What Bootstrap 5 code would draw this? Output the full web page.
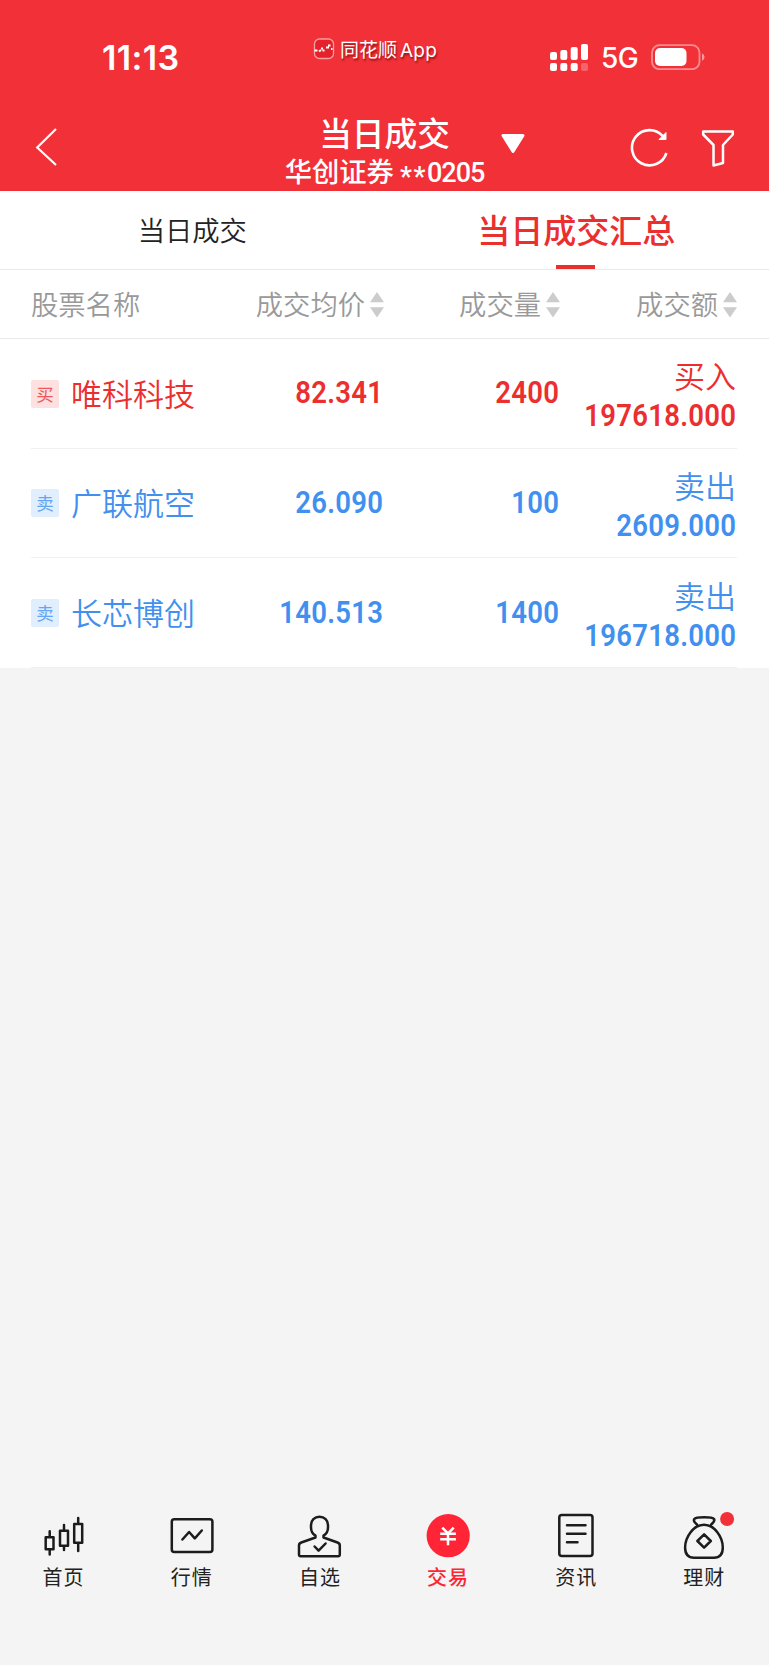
<!DOCTYPE html>
<html lang="zh-CN">
<head>
<meta charset="utf-8">
<meta name="viewport" content="width=device-width, initial-scale=1">
<title>当日成交汇总</title>
<link href="https://cdn.jsdelivr.net/npm/bootstrap@5.3.0/dist/css/bootstrap.min.css" rel="stylesheet">
<style>
  body { font-family: "Noto Sans CJK SC", sans-serif; background: #f4f4f4; color: #222; line-height: 1; }
  svg { display: block; }
  .app { height: 1665px; }
  .top { background: #f23038; height: 191px; color: #fff; }
  .status { height: 110px; padding: 0 64px 0 102px; }
  .clock { font: 600 34px/1 Inter, sans-serif; letter-spacing: .4px; padding-top: 41px; width: 211px; }
  .brand-mini { font-size: 19px; padding-top: 38px; text-shadow: 1px 2px 2px rgba(90,0,0,.65); gap: 5px; }
  .brand-mini .latin { font-family: Inter, sans-serif; letter-spacing: .2px; margin-left: 3px; }
  .signal { padding-top: 43px; }
  .net { font: 500 28px/28px Inter, sans-serif; letter-spacing: -.6px; padding-top: 44px; margin-left: 12px; }
  .battery { padding-top: 44px; margin-left: 13px; }
  .bar { display: grid; grid-template-columns: 1fr auto 1fr; height: 81px; padding: 0 34px 0 34px; align-items: start; }
  .bar-title { font-size: 32.7px; font-weight: 500; line-height: 38px; margin-top: 3px; }
  .bar-sub { font-size: 27.3px; font-weight: 500; line-height: 38px; white-space: pre; }
  .bar-sub .digits { font-family: Roboto, sans-serif; font-size: 27px; letter-spacing: -1px; }
  .bar-sub .stars { letter-spacing: 1.5px; position: relative; top: 4px; }
  .drop { margin: 23px 0 0 16px; }
  .refresh { margin: 17px 29px 0 auto; }
  .filter { margin-top: 20px; }
  .num { font-family: Roboto, sans-serif; font-weight: 600; font-size: 31px; letter-spacing: .3px; transform: scaleX(.887); transform-origin: right center; padding-right: 2px; }
  .deal > .num { margin-top: -2px; }
  .tabs { height: 79px; background: #fff; border-bottom: 1px solid #e9e9e9; }
  .tab { font-size: 27.3px; font-weight: 350; }
  .tab.on { font-size: 33px; font-weight: 500; color: #eb2e2e; padding: 0 1px 2px 0; }
  .tab.on::after { content: ""; position: absolute; left: 50%; bottom: 0; width: 39px; height: 4px; margin-left: -21px; background: #eb2e2e; }
  .cols { display: grid; grid-template-columns: 170px 184px 176px 177px; padding: 0 31px; }
  .heads { height: 69px; background: #fff; border-bottom: 1px solid #e9e9e9; color: #999; font-size: 27.3px; font-weight: 350; }
  .sortable { gap: 5px; padding-right: 1px; white-space: nowrap; }
  .sortable svg { margin-top: 2px; }
  .rows { background: #fff; }
  .deal { height: 109.67px; position: relative; }
  .deal::after { content: ""; position: absolute; left: 31px; right: 32px; bottom: 0; height: 1px; background: #f0f0f0; }
  .buy { color: #eb2e2e; }
  .sell { color: #418fee; }
  .side { width: 28px; height: 28px; font-size: 17.5px; border-radius: 2px; margin-right: 12px; padding-bottom: 1px; }
  .buy .side { background: #fde0e0; color: #ee5858; }
  .sell .side { background: #e1eefd; color: #65a5f1; }
  .stock { font-size: 31px; font-weight: 350; white-space: nowrap; padding-bottom: 3px; }
  .total { line-height: 38px; font-size: 31px; font-weight: 350; padding-top: 2px; }
  .total > span { padding-right: 2px; }
  .total .num { margin-top: 5px; line-height: 34px; }
  .dock { height: 153px; }
  .dock .label { font-size: 20px; letter-spacing: 1px; margin: 7px 0 0 -1px; line-height: 20px; }
  .ic { fill: none; stroke: #1c1c1c; stroke-width: 2.5; stroke-linejoin: round; stroke-linecap: round; }
  .active-tab { color: #ff2436; font-weight: 500; }
</style>
<script src="https://cdn.jsdelivr.net/npm/bootstrap@5.3.0/dist/js/bootstrap.bundle.min.js"></script>
</head>
<body>
<div class="app d-flex flex-column">
  <header class="top">
    <div class="status d-flex align-items-start">
      <div class="clock">11:13</div>
      <div class="brand-mini d-flex align-items-center">
        <svg width="22" height="22" viewBox="0 0 22 22"><rect x="1.500" y="1" width="19" height="19.500" rx="5" fill="#e5222b" stroke="#fff" stroke-opacity=".55" stroke-width="1.300"/><path d="M1.500 12.500h3M6 13.500l2-1.500M8 10.500h2M10.500 11.500v2M13 9.500h3M15 7.500h2.500M18 11h1.500" stroke="#fff" stroke-width="2" fill="none"/></svg>
        <span>同花顺<span class="latin">App</span></span>
      </div>
      <div class="signal ms-auto">
        <svg width="40" height="29" viewBox="0 0 40 29" fill="#fff"><rect x="1" y="9" width="7" height="8" rx="2"/><rect x="11.300" y="7" width="7" height="10" rx="2"/><rect x="21.700" y="4" width="7" height="13" rx="2"/><rect x="32" y="1" width="7" height="16" rx="2"/><rect x="1" y="20" width="7" height="8" rx="2"/><rect x="11.300" y="20" width="7" height="8" rx="2"/><rect x="21.700" y="20" width="7" height="8" rx="2"/><rect x="32" y="20" width="7" height="8" rx="2" opacity=".25"/></svg>
      </div>
      <div class="net">5G</div>
      <div class="battery">
        <svg width="54" height="26" viewBox="0 0 54 26"><rect x="1" y="1.200" width="47.500" height="24" rx="7.500" fill="none" stroke="#fff" stroke-opacity=".45" stroke-width="1.800"/><rect x="4" y="4" width="31.500" height="18" rx="5" fill="#fff"/><path d="M51 9.500c3.300 1.200 3.300 6 0 7.200z" fill="#fff" opacity=".5"/></svg>
      </div>
    </div>
    <div class="bar">
      <svg class="mt-3" width="24" height="44" viewBox="0 0 24 44"><path d="M22 3L3.200 21.500 22 39" fill="none" stroke="#fff" stroke-width="2.200"/></svg>
      <div class="text-center">
        <div class="bar-title">当日成交</div>
        <div class="bar-sub">华创证券 <span class="digits"><span class="stars">**</span>0205</span></div>
      </div>
      <div class="d-flex align-items-start">
        <svg class="drop" width="26" height="22" viewBox="0 0 26 22"><path d="M3 2.500H23L13 18.500z" fill="#fff" stroke="#fff" stroke-width="3" stroke-linejoin="round"/></svg>
        <svg class="refresh" width="42" height="42" viewBox="0 0 42 42"><path d="M36.400 26A17.600 17.600 0 1 1 33 9.300" fill="none" stroke="#fff" stroke-width="2.600"/><path d="M36 5.500V12.500H29z" fill="#fff" stroke="#fff" stroke-width="1"/></svg>
        <svg class="filter" width="34" height="38" viewBox="0 0 34 38"><path d="M2.200 1.500H31.800V4.500L22 15V33L12.500 35.500V15L2.200 4.500z" fill="none" stroke="#fff" stroke-width="2.500" stroke-linejoin="round"/></svg>
      </div>
    </div>
  </header>

  <nav class="tabs row g-0">
    <div class="tab col-6 d-flex justify-content-center align-items-center">当日成交</div>
    <div class="tab on col-6 d-flex justify-content-center align-items-center position-relative">当日成交汇总</div>
  </nav>

  <div class="heads cols align-items-center">
    <div>股票名称</div>
    <div class="sortable d-flex justify-content-end align-items-center">成交均价<svg width="14" height="26" viewBox="0 0 14 26" fill="#ccc"><path d="M0 10.300L7 0l7 10.300zM0 15.300h14L7 25.600z"/></svg></div>
    <div class="sortable d-flex justify-content-end align-items-center">成交量<svg width="14" height="26" viewBox="0 0 14 26" fill="#ccc"><path d="M0 10.300L7 0l7 10.300zM0 15.300h14L7 25.600z"/></svg></div>
    <div class="sortable d-flex justify-content-end align-items-center">成交额<svg width="14" height="26" viewBox="0 0 14 26" fill="#ccc"><path d="M0 10.300L7 0l7 10.300zM0 15.300h14L7 25.600z"/></svg></div>
  </div>

  <main class="rows">
    <div class="deal buy cols align-items-center">
      <div class="d-flex align-items-center"><span class="side d-flex justify-content-center align-items-center">买</span><span class="stock">唯科科技</span></div>
      <div class="num text-end">82.341</div>
      <div class="num text-end">2400</div>
      <div class="total text-end"><span>买入</span><div class="num">197618.000</div></div>
    </div>
    <div class="deal sell cols align-items-center">
      <div class="d-flex align-items-center"><span class="side d-flex justify-content-center align-items-center">卖</span><span class="stock">广联航空</span></div>
      <div class="num text-end">26.090</div>
      <div class="num text-end">100</div>
      <div class="total text-end"><span>卖出</span><div class="num">2609.000</div></div>
    </div>
    <div class="deal sell cols align-items-center">
      <div class="d-flex align-items-center"><span class="side d-flex justify-content-center align-items-center">卖</span><span class="stock">长芯博创</span></div>
      <div class="num text-end">140.513</div>
      <div class="num text-end">1400</div>
      <div class="total text-end"><span>卖出</span><div class="num">196718.000</div></div>
    </div>
  </main>

  <nav class="dock row g-0 mt-auto text-center">
    <div class="col-2 d-flex flex-column align-items-center">
      <svg class="ic" width="56" height="48" viewBox="0 0 56 48"><path d="M9.700 25.300h7.800v12H9.700zM24 18.700h8v15h-8zM38.200 12h8v18.700h-8zM13.700 19.300v6M13.700 37.500v5M28 13v5.500M28 34v4M42.200 6v6M42.200 31v8"/></svg>
      <span class="label">首页</span>
    </div>
    <div class="col-2 d-flex flex-column align-items-center">
      <svg class="ic" width="56" height="48" viewBox="0 0 56 48"><rect x="7.800" y="7.300" width="40.600" height="32.700" rx="2.500"/><path d="M18.400 27.500L25.100 20l5.700 6.300L37.800 18.500"/></svg>
      <span class="label">行情</span>
    </div>
    <div class="col-2 d-flex flex-column align-items-center">
      <svg class="ic" width="56" height="48" viewBox="0 0 56 48"><path d="M23.500 25.500V23.700C20.500 22 19 19 19 15.500V13C19 8.300 22.500 4.800 27.500 4.800S36 8.300 36 13v2.500c0 3.500-1.500 6.500-4.500 8.200v1.800L45.500 30.500q2.300.8 2.300 3V42.500q0 1.800-1.800 1.800H8.800Q7 44.300 7 42.500V33.500q0-2.200 2.300-3z"/><path d="M22.600 34.500L26.600 38.700 33.600 31.500"/></svg>
      <span class="label">自选</span>
    </div>
    <div class="col-2 d-flex flex-column align-items-center active-tab">
      <svg width="56" height="48" viewBox="0.500 0 56 48"><circle cx="27.700" cy="23.700" r="21.600" fill="#ff2436"/><path d="M21.800 15.700L27.500 21.500 33.200 15.700M19.700 21.700H35.400M19.700 27.300H35.400M27.500 21V33.300" fill="none" stroke="#fff" stroke-width="2.500"/></svg>
      <span class="label">交易</span>
    </div>
    <div class="col-2 d-flex flex-column align-items-center">
      <svg class="ic" width="56" height="48" viewBox="0 0 56 48"><rect x="10.300" y="3.100" width="33.200" height="40.900" rx="2.500"/><path d="M18 13.300H36.500M18 21.800H36.500M18 30.300H28.500"/></svg>
      <span class="label">资讯</span>
    </div>
    <div class="col-2 d-flex flex-column align-items-center">
      <svg class="ic" width="60" height="48" viewBox="-2 0 60 48"><path d="M20 12.500C17.500 10.500 16.300 8.500 17.300 7 19 4.700 35.300 4.700 37 7c1 1.500-.5 3.500-2.800 5.500M27 12.700C16.500 12.700 8.100 25 8.100 35.500 8.100 42.500 11 45.700 17 45.700H37c6 0 8.800-3.200 8.800-10.200C45.800 25 37.500 12.700 27 12.700zM27.100 22.300L33.800 29 27.100 35.700 20.400 29z"/><circle cx="50.100" cy="7" r="7" fill="#f23038" stroke="none"/></svg>
      <span class="label">理财</span>
    </div>
  </nav>
</div>
</body>
</html>
